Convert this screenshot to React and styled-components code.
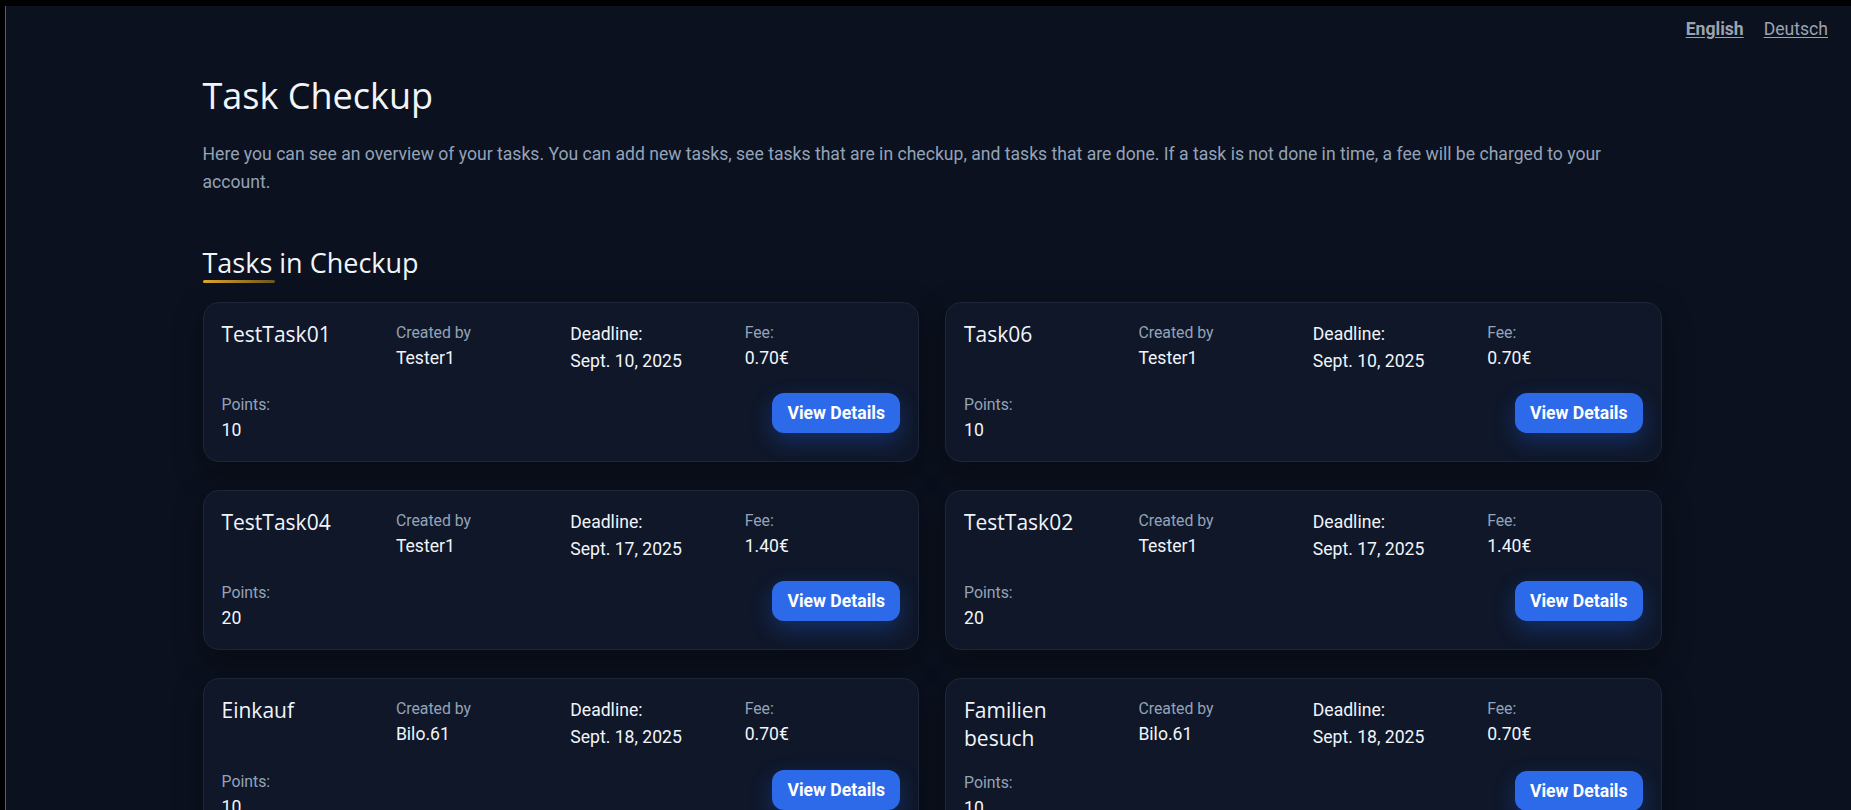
import styled, { createGlobalStyle } from "styled-components";

const GlobalStyle = createGlobalStyle`
  html, body {
    margin: 0;
    padding: 0;
    background: #000;
  }
  body {
    font-family: Roboto, "Liberation Sans", Arial, sans-serif;
    font-size: 17.6px;
  }
  * {
    box-sizing: border-box;
  }
`;

const Page = styled.div`
  margin: 6px 0 0 5px;
  border-left: 1px solid #5c5c5c;
  min-height: calc(100vh - 6px);
  background: #0b111e;
  color: #f1f5f9;
  overflow: hidden;
`;

const LangBar = styled.nav`
  display: flex;
  justify-content: flex-end;
  gap: 20px;
  padding: 13px 23px 0 0;
`;

const LangLink = styled.a`
  font-family: Roboto, "Liberation Sans", sans-serif;
  font-size: 17.6px;
  line-height: 1.172;
  color: #9ca3af;
  text-decoration: underline;
  text-underline-offset: 2px;
  font-weight: ${(p) => (p.$active ? 700 : 400)};
  cursor: pointer;
`;

const Main = styled.main`
  padding: 0 0 40px 7px;
`;

const Container = styled.div`
  max-width: 1459px;
  margin: 0 auto;
`;

const Title = styled.h1`
  margin: 34px 0 0;
  font-family: "Open Sans", "Noto Sans", sans-serif;
  font-size: 36px;
  font-weight: 500;
  line-height: 1.2;
  color: #f1f5f9;
`;

const Intro = styled.p`
  margin: 23px 0 0;
  font-size: 17.6px;
  line-height: 1.6;
  color: #94a3b8;
`;

const SectionTitle = styled.h2`
  margin: 51px 0 0;
  font-family: "Open Sans", "Noto Sans", sans-serif;
  font-size: 27px;
  font-weight: 500;
  line-height: 1.2;
  color: #f1f5f9;

  &::after {
    content: "";
    display: block;
    width: 72px;
    height: 3px;
    margin-top: 1px;
    border-radius: 2px;
    background: linear-gradient(90deg, #e0a62a, #6b5520);
  }
`;

const CardGrid = styled.div`
  display: grid;
  grid-template-columns: repeat(2, 1fr);
  column-gap: 26px;
  row-gap: 28px;
  margin-top: 19px;
`;

const Card = styled.article`
  display: grid;
  grid-template-columns: repeat(4, 1fr);
  column-gap: 19px;
  row-gap: 19px;
  padding: 18px;
  background: #0f1729;
  border: 1px solid #1d2739;
  border-radius: 16px;
  box-shadow: 0 10px 30px rgba(0, 0, 0, 0.35);
`;

const TaskName = styled.h3`
  margin: 0;
  font-family: "Open Sans", "Noto Sans", sans-serif;
  font-size: 21px;
  font-weight: 500;
  line-height: 1.3;
  color: #f1f5f9;
`;

const Field = styled.div`
  display: flex;
  flex-direction: column;
`;

const Label = styled.span`
  font-size: ${(p) => (p.$strong ? "17.6px" : "15.84px")};
  line-height: ${(p) => (p.$strong ? "26.4px" : "23.76px")};
  color: ${(p) => (p.$strong ? "#f1f5f9" : "#94a3b8")};
`;

const Value = styled.span`
  font-size: 17.6px;
  line-height: 26.4px;
  color: #f1f5f9;
`;

const DetailsButton = styled.button`
  grid-column: 4;
  justify-self: end;
  align-self: start;
  height: 40px;
  padding: 0 15px;
  border: none;
  border-radius: 12px;
  background: #2d6aea;
  color: #fff;
  font-family: Roboto, "Liberation Sans", sans-serif;
  font-size: 17.6px;
  font-weight: 700;
  cursor: pointer;
  box-shadow: 0 8px 22px rgba(37, 99, 235, 0.32);
`;

const tasks = [
  { id: 1, name: "TestTask01", by: "Tester1", deadline: "Sept. 10, 2025", fee: "0.70€", points: 10 },
  { id: 2, name: "Task06", by: "Tester1", deadline: "Sept. 10, 2025", fee: "0.70€", points: 10 },
  { id: 3, name: "TestTask04", by: "Tester1", deadline: "Sept. 17, 2025", fee: "1.40€", points: 20 },
  { id: 4, name: "TestTask02", by: "Tester1", deadline: "Sept. 17, 2025", fee: "1.40€", points: 20 },
  { id: 5, name: "Einkauf", by: "Bilo.61", deadline: "Sept. 18, 2025", fee: "0.70€", points: 10 },
  { id: 6, name: "Familien besuch", by: "Bilo.61", deadline: "Sept. 18, 2025", fee: "0.70€", points: 10 },
];

function TaskCard({ task }) {
  return (
    <Card>
      <TaskName>{task.name}</TaskName>
      <Field>
        <Label>Created by</Label>
        <Value>{task.by}</Value>
      </Field>
      <Field>
        <Label $strong>Deadline:</Label>
        <Value>{task.deadline}</Value>
      </Field>
      <Field>
        <Label>Fee:</Label>
        <Value>{task.fee}</Value>
      </Field>
      <Field>
        <Label>Points:</Label>
        <Value>{task.points}</Value>
      </Field>
      <DetailsButton>View Details</DetailsButton>
    </Card>
  );
}

export default function App() {
  return (
    <>
      <GlobalStyle />
      <Page>
        <LangBar>
          <LangLink $active>English</LangLink>
          <LangLink>Deutsch</LangLink>
        </LangBar>
        <Main>
          <Container>
            <Title>Task Checkup</Title>
            <Intro>
              Here you can see an overview of your tasks. You can add new tasks, see tasks that are in
              checkup, and tasks that are done. If a task is not done in time, a fee will be charged to
              your account.
            </Intro>
            <SectionTitle>Tasks in Checkup</SectionTitle>
            <CardGrid>
              {tasks.map((task) => (
                <TaskCard key={task.id} task={task} />
              ))}
            </CardGrid>
          </Container>
        </Main>
      </Page>
    </>
  );
}
